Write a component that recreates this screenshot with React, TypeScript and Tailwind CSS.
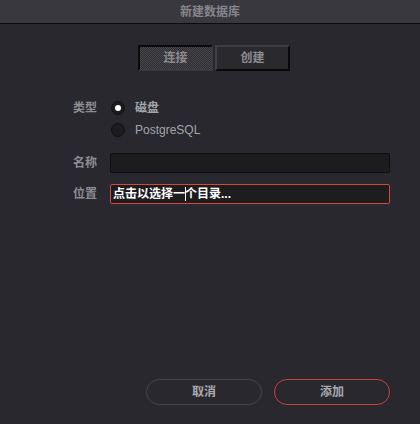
import { useState } from "react";

const font = "font-['Liberation_Sans','Noto_Sans_CJK_SC',sans-serif]";

const Radio = ({ checked, label, bold }: { checked: boolean; label: string; bold?: boolean }) => (
    <div className="flex h-5 items-center">
        <span className="ml-[1px] flex h-[14px] w-[14px] items-center justify-center rounded-full border border-[#111113] bg-[#1c1c1f]">
            {checked && <span className="h-[6px] w-[6px] rounded-full bg-white" />}
        </span>
        <span className={bold ? "ml-[10px] text-[12px] font-bold text-[#a3a6aa]" : "ml-[10px] text-[12px] text-[#a3a6aa]"}>{label}</span>
    </div>
);

const App = () => {
    const [mode, setMode] = useState("connect");
    return (
        <div className={`flex h-[424px] w-[420px] flex-col bg-[#28282e] ${font}`}>
            <div className="flex h-6 shrink-0 items-center justify-center border-b border-[#0c0c0e] bg-[#38383e] text-[12px] font-bold text-[#86868b]">
                新建数据库
            </div>
            <div className="mt-[21px] flex justify-center gap-[2px] pl-2">
                <button
                    onClick={() => setMode("connect")}
                    className={
                        mode === "connect"
                            ? "h-[26px] w-[75px] border-2 border-t-[#0a0a0c] border-l-[#0a0a0c] border-r-[#3a3a40] border-b-[#3a3a40] bg-[repeating-conic-gradient(#47474c_0%_25%,#2c2c31_0%_50%)] bg-[length:2px_2px] text-[12px] font-bold text-[#8c8c92]"
                            : "h-[26px] w-[75px] border-2 border-t-[#3e3e44] border-l-[#3e3e44] border-r-[#0a0a0c] border-b-[#0a0a0c] bg-[#29292e] text-[12px] font-bold text-[#8c8c92]"
                    }>
                    连接
                </button>
                <button
                    onClick={() => setMode("create")}
                    className={
                        mode === "create"
                            ? "h-[26px] w-[75px] border-2 border-t-[#0a0a0c] border-l-[#0a0a0c] border-r-[#3a3a40] border-b-[#3a3a40] bg-[repeating-conic-gradient(#47474c_0%_25%,#2c2c31_0%_50%)] bg-[length:2px_2px] text-[12px] font-bold text-[#8c8c92]"
                            : "h-[26px] w-[75px] border-2 border-t-[#3e3e44] border-l-[#3e3e44] border-r-[#0a0a0c] border-b-[#0a0a0c] bg-[#29292e] text-[12px] font-bold text-[#8c8c92]"
                    }>
                    创建
                </button>
            </div>
            <div className="mt-[27px] flex flex-col pl-[73px] pr-[30px]">
                <div className="flex">
                    <span className="flex h-5 w-[37px] items-center text-[12px] font-bold text-[#8e8e94]">类型</span>
                    <div className="flex flex-col gap-[2px]">
                        <Radio checked bold label="磁盘" />
                        <Radio checked={false} label="PostgreSQL" />
                    </div>
                </div>
                <div className="mt-[13px] flex items-center">
                    <span className="w-[37px] text-[12px] font-bold text-[#8e8e94]">名称</span>
                    <div className="h-5 flex-1 rounded-[2px] border border-[#0e0e10] bg-[#1c1c1e]" />
                </div>
                <div className="mt-[11px] flex items-center">
                    <span className="w-[37px] text-[12px] font-bold text-[#8e8e94]">位置</span>
                    <div className="relative flex h-5 flex-1 items-center rounded-[2px] border border-[#d8453a] bg-[#1d1d1f] pl-[2px] text-[12px] font-bold text-white">
                        点击以选择一个目录...
                        <span className="absolute left-[74px] top-[2px] h-[14px] w-px bg-white" />
                    </div>
                </div>
            </div>
            <div className="mt-auto flex justify-end gap-3 pb-[19px] pr-[30px]">
                <button className="h-[26px] w-[116px] rounded-full border border-[#45454b] text-[12px] font-bold text-[#a8a8ae]">
                    取消
                </button>
                <button className="h-[26px] w-[116px] rounded-full border border-[#cc4036] text-[12px] font-bold text-[#a8a8ae]">
                    添加
                </button>
            </div>
        </div>
    );
};

export default App;
